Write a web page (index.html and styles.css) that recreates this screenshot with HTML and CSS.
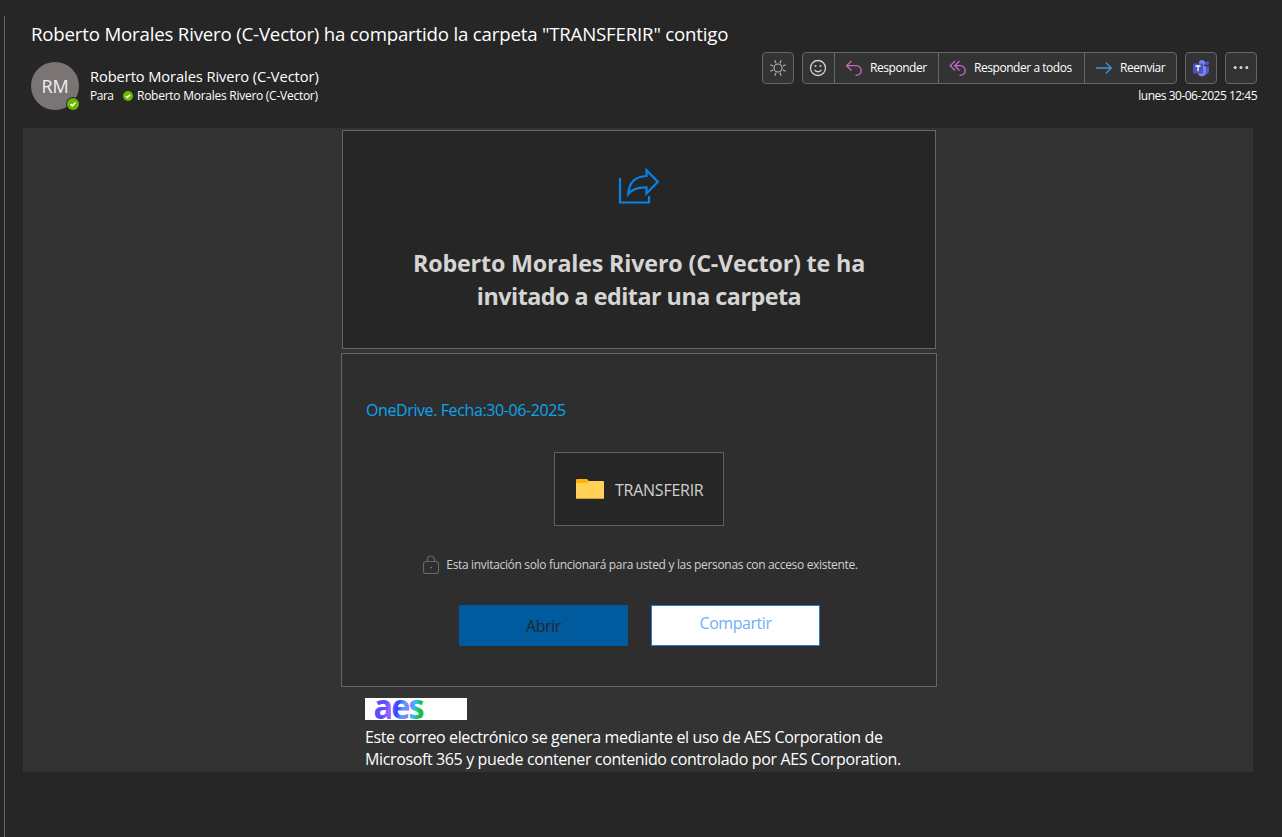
FILE: index.html
```
<!DOCTYPE html>
<html lang="es">
<head>
<meta charset="utf-8">
<title>Correo</title>
<link rel="stylesheet" href="styles.css">
</head>
<body>
<main class="pane">
  <header class="header">
    <h1 class="subject">Roberto Morales Rivero (C-Vector) ha compartido la carpeta "TRANSFERIR" contigo</h1>
    <div class="avatar"><span>RM</span>
      <svg class="presence" viewBox="0 0 14 14"><circle cx="7" cy="7" r="7" fill="#262626"/><circle cx="7" cy="7" r="6" fill="#6bb700"/><path d="M4.500 7.200l1.800 1.700 3.300-3.400" fill="none" stroke="#fff" stroke-width="1.600"/></svg>
    </div>
    <div class="people">
      <div class="from">Roberto Morales Rivero (C-Vector)</div>
      <div class="to"><span class="para">Para</span>
        <svg class="dot" viewBox="0 0 10 10"><circle cx="5" cy="5" r="5" fill="#6bb700"/><path d="M2.800 5.100l1.600 1.500 2.800-2.900" fill="none" stroke="#fff" stroke-width="1.400"/></svg>
        <span class="to-name">Roberto Morales Rivero (C-Vector)</span></div>
    </div>
    <div class="actions">
      <div class="toolbar">
        <div class="btn">
          <svg width="18" height="18" viewBox="0 0 18 18" fill="none" stroke="#b4b4b4" stroke-width="1.1"><circle cx="9" cy="9" r="4"/><path d="M11 4.200L12.200 1.300M13.800 7L16.700 5.800M13.800 11L16.700 12.200M11 13.800L12.200 16.700M7 13.800L5.800 16.700M4.200 11L1.300 12.200M4.200 7L1.300 5.800M7 4.200L5.800 1.300"/></svg>
        </div>
        <div class="group">
          <div class="seg smile">
            <svg width="18" height="18" viewBox="0 0 18 18" fill="none" stroke="#d2d2d2" stroke-width="1.300"><circle cx="9" cy="9" r="7.500"/><path d="M5.500 11Q9 14.500 12.500 11"/><circle cx="6.500" cy="7" r="1" fill="#d2d2d2" stroke="none"/><circle cx="11.500" cy="7" r="1" fill="#d2d2d2" stroke="none"/></svg>
          </div>
          <div class="seg reply">
            <svg width="18" height="18" viewBox="0 0 18 18" fill="none" stroke="#c868c8" stroke-width="1.300"><path d="M6.500 2L1.500 6.700L6.500 11.500M1.700 6.700H11.500A4.700 4.700 0 0 1 11.500 16.200H10.500"/></svg>
            <span class="label">Responder</span>
          </div>
          <div class="seg reply-all">
            <svg width="18" height="18" viewBox="0 0 18 18" fill="none" stroke="#c868c8" stroke-width="1.300"><path d="M6 2L1.200 6.700L6 11.500M10.500 2L5.700 6.700L10.500 11.500M5.900 6.700H11.500A4.700 4.700 0 0 1 11.500 16.200H10.500"/></svg>
            <span class="label">Responder a todos</span>
          </div>
          <div class="seg forward">
            <svg width="18" height="18" viewBox="0 0 18 18" fill="none" stroke="#3a96dd" stroke-width="1.300"><path d="M1 9H16M10.800 3.500L16.300 9L10.800 14.500"/></svg>
            <span class="label">Reenviar</span>
          </div>
        </div>
        <div class="btn">
          <svg width="18" height="18" viewBox="0 0 18 18"><circle cx="10" cy="4" r="3" fill="#7b83eb"/><circle cx="15" cy="4.300" r="2" fill="#5059c9"/><path d="M12 7.500H17V12A3 3 0 0 1 12 14.500Z" fill="#5059c9"/><path d="M6 7H14V13A4.200 4.200 0 0 1 6 15Z" fill="#7b83eb"/><rect x="1" y="4.500" width="10" height="10" rx="1" fill="#4b53bc"/><path d="M3.500 7H8.500M6 7V12.300" stroke="#fff" stroke-width="1.300"/></svg>
        </div>
        <div class="btn">
          <svg width="18" height="18" viewBox="0 0 18 18" fill="#d8d8d8"><circle cx="3.200" cy="8.500" r="1.500"/><circle cx="9" cy="8.500" r="1.500"/><circle cx="14.800" cy="8.500" r="1.500"/></svg>
        </div>
      </div>
      <div class="date">lunes 30-06-2025 12:45</div>
    </div>
  </header>
  <section class="mail">
    <div class="card invite">
      <svg class="share" width="44" height="40" viewBox="0 0 44 40" fill="none" stroke="#0583e8" stroke-width="2.200"><path d="M4 12V36.500H33V30"/><path d="M30.500 4.200L41.800 15.800L30.500 27.500V21.300C21 21 16 23.500 12.200 28C13 17 19 10.500 30.500 10Z"/></svg>
      <h2 class="title">Roberto Morales Rivero (C-Vector) te ha<br><span class="title-end">invitado a editar una carpeta</span></h2>
    </div>
    <div class="card detail">
      <div class="source">OneDrive. Fecha:30-06-2025</div>
      <div class="folder">
        <svg width="28" height="20" viewBox="0 0 28 20"><path d="M0 1Q0 0 1 0H11L13 2V5H0Z" fill="#ffb300"/><path d="M0 4H11L13 2H27Q28 2 28 3V19Q28 20 27 20H1Q0 20 0 19Z" fill="#ffd257"/><path d="M0.500 19.500H27.500" stroke="#d99b32"/></svg>
        <span class="folder-name">TRANSFERIR</span>
      </div>
      <div class="notice">
        <svg width="18" height="20" viewBox="0 0 18 20" fill="none" stroke="#686868" stroke-width="1.100"><rect x="1.500" y="6.500" width="15" height="12" rx="2.500"/><path d="M5.500 6.500V4.500A3.500 3.500 0 0 1 12.500 4.500V6.500"/><circle cx="9" cy="12.500" r="1" fill="#686868" stroke="none"/></svg>
        <span>Esta invitación solo funcionará para usted y las personas con acceso existente.</span>
      </div>
      <div class="buttons">
        <div class="open">Abrir</div>
        <div class="share-btn">Compartir</div>
      </div>
    </div>
    <footer class="footer">
      <svg class="brand" width="102" height="22" viewBox="0 0 102 22">
        <defs>
          <linearGradient id="aes-fill" gradientUnits="userSpaceOnUse" x1="8" y1="4" x2="58" y2="14"><stop offset="0" stop-color="#5a4cff"/><stop offset=".12" stop-color="#9a66ff"/><stop offset=".28" stop-color="#2e48ff"/><stop offset=".4" stop-color="#5a9cf8"/><stop offset=".52" stop-color="#8f78ff"/><stop offset=".64" stop-color="#28c4f0"/><stop offset=".76" stop-color="#20bd2c"/><stop offset="1" stop-color="#20cc90"/></linearGradient>
        </defs>
        <rect width="102" height="22" fill="#fff"/>
        <text class="aes" transform="translate(8.500 20.600) scale(.94 1)" fill="url(#aes-fill)">aes</text>
      </svg>
      <p class="legal">Este correo electrónico se genera mediante el uso de AES Corporation de<br>Microsoft 365 y puede contener contenido controlado por AES Corporation.</p>
    </footer>
  </section>
</main>
</body>
</html>
```
FILE: styles.css
```
* { box-sizing: border-box; }
body { margin: 0; width: 1282px; height: 837px; overflow: hidden; background: #262626; color: #fff; font-family: "Open Sans", "Noto Sans", sans-serif; white-space: nowrap; }
h1, h2, p { margin: 0; font-weight: 400; }
svg { display: block; flex: none; }
.pane { margin: 16px 0 0 4px; height: 821px; border-left: 1px solid #666; padding: 0 29px 0 18px; }
.header { height: 112px; padding: 0 0 0 8px; display: grid; grid-template-columns: 59px 1fr auto; grid-template-rows: 36px 76px; margin-right: -4px; }
.subject { grid-column: 1 / 4; font-size: 18.67px; line-height: 36px; letter-spacing: -0.19px; }
.avatar { position: relative; width: 48px; height: 48px; margin-top: 10px; border-radius: 50%; background: #7a7574; color: #f0f0f0; font-size: 18px; line-height: 48px; text-align: center; letter-spacing: -0.2px; }
.presence { position: absolute; right: -1px; bottom: -1px; width: 14px; height: 14px; }
.people { padding-top: 14px; }
.from { font-size: 14.67px; line-height: 20px; height: 20px; letter-spacing: -0.08px; }
.to { display: flex; align-items: center; height: 19px; font-size: 12px; letter-spacing: -0.26px; }
.para { width: 33px; letter-spacing: -0.5px; }
.dot { width: 10px; height: 10px; margin-right: 4px; }
.toolbar { display: flex; gap: 8px; height: 32px; }
.actions { font-size: 12px; letter-spacing: -0.45px; }
.btn, .group { height: 32px; border: 1px solid #666; border-radius: 4px; background: #333; }
.btn { width: 32px; display: flex; align-items: center; justify-content: center; }
.group { display: flex; width: 375px; }
.seg { display: flex; align-items: center; height: 30px; padding-left: 10px; gap: 7px; border-right: 1px solid #666; }
.seg:last-child { border: 0; }
.label { padding-bottom: 2px; }
.smile { width: 32px; padding-left: 6px; }
.reply { width: 104px; }
.reply-all { width: 146px; }
.forward { width: 91px; }
.date { text-align: right; line-height: 24px; letter-spacing: -0.5px; }
.mail { height: 644px; background: #333; padding-top: 2px; display: flex; flex-direction: column; align-items: center; }
.card { border: 1px solid #666; flex: none; }
.invite { width: 594px; height: 219px; background: #262626; display: flex; flex-direction: column; align-items: center; padding-top: 35px; margin-left: 2px; }
.share { margin-right: 2px; }
.title { margin-top: 41px; font-size: 23.3px; line-height: 33px; font-weight: 700; color: #d6d5d3; text-align: center; letter-spacing: -0.18px; }
.title-end { letter-spacing: -0.5px; }
.detail { width: 596px; height: 334px; margin: 4px 0 0 2px; background: #2e2e2e; display: flex; flex-direction: column; align-items: center; }
.source { align-self: flex-start; padding: 45px 0 0 24px; font-size: 16px; line-height: 22px; color: #0ba4f0; letter-spacing: -0.4px; }
.folder { width: 170px; height: 74px; margin-top: 31px; border: 1px solid #606060; background: #262626; display: flex; align-items: center; padding: 0 0 0 21px; gap: 11px; font-size: 16px; color: #d0d0d0; }
.folder-name { letter-spacing: -0.25px; padding-top: 2px; }
.notice { margin: 29px 0 0 2px; height: 20px; display: flex; gap: 6px; font-size: 12px; line-height: 20px; color: #d0d0d0; letter-spacing: -0.33px; }
.buttons { margin: 30px 0 0 1px; display: flex; gap: 23px; text-align: center; font-size: 16px; letter-spacing: -0.45px; }
.open { width: 169px; height: 41px; border-radius: 1px; background: #005a9e; color: #262626; line-height: 43px; }
.share-btn { width: 169px; height: 41px; border: 1px solid #2b7cc0; background: #fff; color: #6eaef8; line-height: 35px; border-radius: 1px; }
.footer { width: 548px; margin: 11px 0 0 2px; }
.brand { overflow: visible; }
.aes { font-family: "Open Sans", sans-serif; font-weight: 700; font-size: 34.5px; letter-spacing: -2px; }
.legal { margin-top: 6px; font-size: 16px; line-height: 22px; letter-spacing: -0.37px; }
```
